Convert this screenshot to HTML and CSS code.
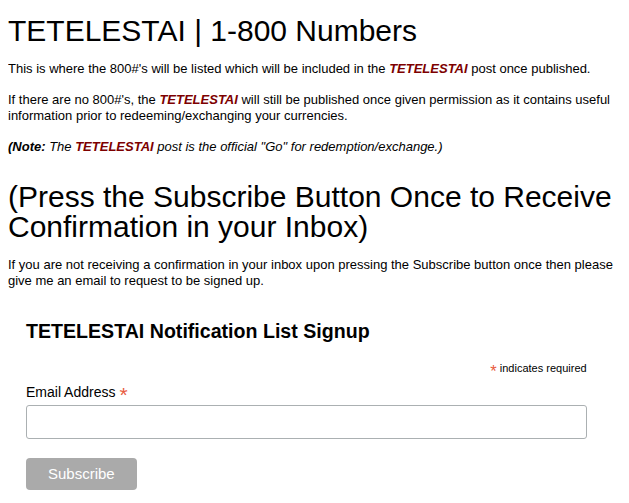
FILE: index.html
```html
<!DOCTYPE html>
<html>
<head>
<meta charset="utf-8">
<link rel="stylesheet" href="styles.css">
</head>
<body>
<h1 class="title">TETELESTAI | 1-800 Numbers</h1>
<p class="text">This is where the 800#'s will be listed which will be included in the <b class="brand">TETELESTAI</b> post once published.</p>
<p class="text">If there are no 800#'s, the <b class="brand">TETELESTAI</b> will still be published once given permission as it contains useful information prior to redeeming/exchanging your currencies.</p>
<p class="text note"><b>(Note:</b> The <b class="brand">TETELESTAI</b> post is the official "Go" for redemption/exchange.)</p>
<h1 class="title title-2">(Press the Subscribe Button Once to Receive Confirmation in your Inbox)</h1>
<p class="text">If you are not receiving a confirmation in your inbox upon pressing the Subscribe button once then please give me an email to request to be signed up.</p>
<div class="signup">
  <form class="signup-form">
    <h2 class="signup-title">TETELESTAI Notification List Signup</h2>
    <div class="required-note"><span class="asterisk">*</span> indicates required</div>
    <div class="field-group">
      <label class="field-label" for="mce-EMAIL">Email Address <span class="asterisk">*</span></label>
      <input class="field-input" type="email" id="mce-EMAIL">
    </div>
    <button class="button" type="button">Subscribe</button>
  </form>
</div>
</body>
</html>
```
FILE: styles.css
```css
html, body {
  background: #fff;
}
body {
  margin: 8px;
  font-family: "Liberation Sans", Arial, sans-serif;
  color: #000;
}
.title {
  font-size: 30px;
  font-weight: normal;
  line-height: 30px;
  margin: 8px 0 0;
}
.title-2 {
  margin-top: 27px;
}
.text {
  font-size: 13px;
  line-height: 16px;
  margin: 15px 0 0;
}
.note {
  font-style: italic;
}
.brand {
  color: #7d0000;
  font-style: italic;
}
.signup {
  padding-left: 18px;
  padding-right: 11px;
  font-size: 14px;
  margin-top: 31px;
}
.signup-title {
  font-size: 19.6px;
  font-weight: bold;
  margin: 15px 0 19px;
}
.required-note {
  text-align: right;
  font-size: 11px;
  margin-right: 4%;
  margin-bottom: 10px;
}
.asterisk {
  color: #e85c41;
  font-size: 150%;
  position: relative;
  top: 5px;
  line-height: 0;
}
.field-group {
  width: 96%;
  padding-bottom: 3%;
  min-height: 50px;
}
.field-label {
  display: block;
  margin-bottom: 5px;
}
.field-input {
  display: block;
  box-sizing: border-box;
  width: 100%;
  height: 34px;
  border: 1px solid #abb0b2;
  border-radius: 3px;
  font: 14px "Liberation Sans", Arial, sans-serif;
  padding: 8px 0;
  text-indent: 2%;
}
.button {
  background-color: #aaa;
  border: 0;
  border-radius: 4px;
  color: #fff;
  font: 15px "Liberation Sans", Arial, sans-serif;
  height: 32px;
  line-height: 32px;
  padding: 0 22px;
  margin: 1px 0 0;
}
```
